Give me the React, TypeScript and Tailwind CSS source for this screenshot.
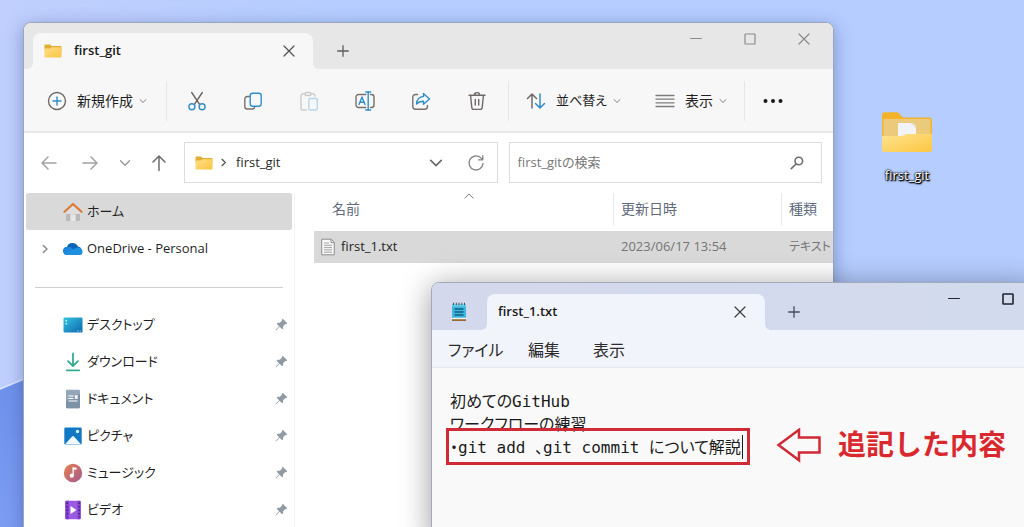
import type { ReactNode } from "react";
import clsx from "clsx";

function StrokeIcon({
  className,
  viewBox = "0 0 20 20",
  width = 1.4,
  children,
}: {
  className: string;
  viewBox?: string;
  width?: number;
  children: ReactNode;
}) {
  return (
    <svg
      viewBox={viewBox}
      className={clsx("shrink-0", className)}
      fill="none"
      stroke="currentColor"
      strokeWidth={width}
      strokeLinecap="round"
      strokeLinejoin="round"
      aria-hidden
    >
      {children}
    </svg>
  );
}

function ChevronDown({ className }: { className: string }) {
  return (
    <StrokeIcon className={className} viewBox="0 0 12 12" width={1.4}>
      <path d="M1.5 3.8 6 8.2l4.5-4.4" />
    </StrokeIcon>
  );
}

function ChevronRight({ className }: { className: string }) {
  return (
    <StrokeIcon className={className} viewBox="0 0 12 12" width={1.8}>
      <path d="M4 1.8 8.4 6 4 10.2" />
    </StrokeIcon>
  );
}

function CloseIcon({ className }: { className: string }) {
  return (
    <StrokeIcon className={className} viewBox="0 0 12 12" width={1.2}>
      <path d="m1 1 10 10M11 1 1 11" />
    </StrokeIcon>
  );
}

function PlusIcon({ className }: { className: string }) {
  return (
    <StrokeIcon className={className} viewBox="0 0 12 12" width={1.3}>
      <path d="M6 .7v10.6M.7 6h10.6" />
    </StrokeIcon>
  );
}

function MinimizeIcon({ className }: { className: string }) {
  return (
    <StrokeIcon className={className} viewBox="0 0 12 12" width={1.2}>
      <path d="M.6 5.5h10.8" />
    </StrokeIcon>
  );
}

function MaximizeIcon({ className, width = 1.2 }: { className: string; width?: number }) {
  return (
    <StrokeIcon className={className} viewBox="0 0 12 12" width={width}>
      <rect x="1" y="1" width="10" height="10" rx=".6" />
    </StrokeIcon>
  );
}

function FolderIcon({ className }: { className: string }) {
  return (
    <svg viewBox="0 0 18 14" className={clsx("shrink-0", className)} aria-hidden>
      <defs>
        <linearGradient id="folder-front" x1="0" y1="0" x2="1" y2="1">
          <stop offset="0" stopColor="#ffe08a" />
          <stop offset="1" stopColor="#f9c440" />
        </linearGradient>
      </defs>
      <path d="M.5 1.4c0-.6.4-1 1-1H6l1.700 1.500h8.800c.6 0 1 .4 1 1V7H.5z" fill="#dfae34" />
      <path d="M.5 4.600h5.700l1.600-1.400h8.700c.6 0 1 .4 1 1v8.300c0 .6-.4 1-1 1h-15c-.6 0-1-.4-1-1z" fill="url(#folder-front)" />
    </svg>
  );
}

function PinIcon() {
  return (
    <svg viewBox="0 0 14 14" className="size-[13px] shrink-0" fill="#8f9aa3" aria-hidden>
      <path d="M8.300.8 13.200 5.700 12 6.600l-.9-.2-2.400 2.400.1 2.300-1.100 1L5 9.400 1.200 13.200.6 13.300.7 12.700 4.500 8.900 1.800 6.200l1-1.100 2.400.1 2.400-2.400-.2-.9z" />
    </svg>
  );
}

function HomeIcon() {
  return (
    <svg viewBox="0 0 20 20" className="size-5 shrink-0" aria-hidden>
      <path d="M3 8.500 10 2.500l7 6V18a1 1 0 0 1-1 1h-3.500v-6.500h-5V19H4a1 1 0 0 1-1-1z" fill="#b9b9b9" />
      <path d="M3 8.500 10 2.500l7 6V12H3z" fill="#dedede" />
      <path d="M7.500 12.500h5V19h-5z" fill="#e6e6e6" />
      <path d="M1.500 9.800 10 2l8.500 7.800" fill="none" stroke="#dd7a35" strokeWidth="2.2" strokeLinecap="round" strokeLinejoin="round" />
    </svg>
  );
}

function CloudIcon() {
  return (
    <svg viewBox="0 0 20 14" className="h-[14px] w-5 shrink-0" aria-hidden>
      <path d="M4.500 13A4 4 0 0 1 3.800 5 6 6 0 0 1 15 4.500 4.400 4.400 0 0 1 15.800 13z" fill="#0f62b5" />
      <path d="M4.500 13a4 4 0 0 1-.9-7.900c2-.6 3.900 0 5.500 1.200L19 12c-.7.700-1.700 1-3 1z" fill="#1a86dd" />
      <path d="M1.500 11.300 11 7.200c2.500-2.500 6.800-2.400 8.300 1 .8 2-.1 4.800-3.300 4.800H4.500c-1.300 0-2.400-.7-3-1.700z" fill="#1f8fe0" />
    </svg>
  );
}

function DesktopIcon() {
  return (
    <svg viewBox="0 0 20 20" className="size-5 shrink-0" aria-hidden>
      <defs>
        <linearGradient id="desktop-fill" x1="0" y1="0" x2="1" y2="1">
          <stop offset="0" stopColor="#35c4e0" />
          <stop offset="1" stopColor="#0c67ad" />
        </linearGradient>
      </defs>
      <rect x=".5" y="2.500" width="19" height="15" rx="1.200" fill="url(#desktop-fill)" />
      <path d="M2.500 5h1.600v1.600H2.500zM2.500 8h1.600v1.600H2.500z" fill="#c8f3fb" />
      <path d="M14 16h1.500M16.500 16H18" stroke="#7ad1f0" />
    </svg>
  );
}

function DownloadIcon() {
  return (
    <StrokeIcon className="size-5 text-[#35ab92]" width={1.8}>
      <path d="M10 1.500v12.300M5 9.200l5 4.800 5-4.800M3.800 18.300h12.400" />
    </StrokeIcon>
  );
}

function DocumentIcon() {
  return (
    <svg viewBox="0 0 20 20" className="size-5 shrink-0" aria-hidden>
      <rect x="3" y=".8" width="14" height="18.400" rx="1.200" fill="#94a7b8" />
      <path d="M3 12 17 5v13a1.200 1.200 0 0 1-1.200 1.200H4.200A1.200 1.200 0 0 1 3 18z" fill="#7c92a6" />
      <path d="M5.500 7h5M5.500 9.500h5M5.500 12h9" stroke="#fff" strokeWidth="1.100" />
      <rect x="11.800" y="6.300" width="2.800" height="3.500" fill="#fff" />
    </svg>
  );
}

function PictureIcon() {
  return (
    <svg viewBox="0 0 20 20" className="size-5 shrink-0" aria-hidden>
      <rect x="1.300" y="1.500" width="17.400" height="17" rx="1.300" fill="#1278c4" />
      <path d="m2 18.300 6.900-7.600a1.500 1.500 0 0 1 2.200 0l6.900 7.600z" fill="#eef8ff" />
      <circle cx="14.500" cy="5.500" r="1.700" fill="#d5f0ff" />
    </svg>
  );
}

function MusicIcon() {
  return (
    <svg viewBox="0 0 20 20" className="size-5 shrink-0" aria-hidden>
      <defs>
        <linearGradient id="music-fill" x1="0" y1="0" x2="1" y2="1">
          <stop offset="0" stopColor="#e8824f" />
          <stop offset="1" stopColor="#a4588f" />
        </linearGradient>
      </defs>
      <circle cx="10" cy="10" r="9.200" fill="url(#music-fill)" />
      <path d="M10.200 4.500v8" stroke="#fff" strokeWidth="1.300" />
      <path d="M9.600 4.500h3.900v2.200H9.600z" fill="#fff" />
      <circle cx="8.800" cy="12.700" r="2.100" fill="#fff" />
    </svg>
  );
}

function VideoIcon() {
  return (
    <svg viewBox="0 0 20 20" className="size-5 shrink-0" aria-hidden>
      <rect x="2.300" y=".8" width="15.400" height="18.400" rx="1.300" fill="#9a5be2" />
      <path d="M2.300 2A1.200 1.200 0 0 1 3.500.8H6v18.400H3.500A1.200 1.200 0 0 1 2.300 18zM14.500.8h2a1.200 1.200 0 0 1 1.200 1.200v16a1.200 1.200 0 0 1-1.200 1.200h-2z" fill="#8443cf" />
      <path d="M4.200 2.500v15M16.100 2.500v15" stroke="#4a1f8a" strokeWidth="1.500" strokeDasharray="1.600 1.900" />
      <path d="M7.500 6v8l6-4z" fill="#fff" />
    </svg>
  );
}

function TextFileIcon() {
  return (
    <svg viewBox="0 0 14 18" className="h-[18px] w-[14px] shrink-0" aria-hidden>
      <path d="M.7 1.200h9.500L13.300 4.500v12.300H.7z" fill="#f7f7f7" stroke="#8d8d8d" />
      <path d="M10 1.200v3.500h3.300" fill="none" stroke="#8d8d8d" />
      <path d="M3 5h5M3 7.300h8M3 9.600h8M3 11.900h8M3 14.200h8" stroke="#a3a3a3" />
    </svg>
  );
}

function NotepadIcon() {
  return (
    <svg viewBox="0 0 16 20" className="h-5 w-4 shrink-0" aria-hidden>
      <path d="M1 2.500h14v13.500H1z" fill="#3db7dc" />
      <path d="M1 2.500h14v2H1z" fill="#6cd0ea" />
      <path d="M2.500.7v2.500M5.300.7v2.500M8 .7v2.500M10.800.7v2.500M13.500.7v2.500" stroke="#37505e" />
      <path d="M3.500 7h9M3.500 10h9M3.500 13h9" stroke="#135f82" strokeWidth="1.400" />
      <path d="M1 15.800h14v1.400H1z" fill="#f2f2ea" />
      <path d="M1 17.200h14V19H1z" fill="#9a6a35" />
    </svg>
  );
}

const COMMANDS = [
  {
    label: "切り取り",
    icon: (
      <StrokeIcon className="size-5">
        <path d="M4.700 1.500 12.600 13.300M15.300 1.500 7.400 13.300" stroke="#6b6461" />
        <circle cx="4.900" cy="15.800" r="3" stroke="#2f8dc9" />
        <circle cx="15.100" cy="15.800" r="3" stroke="#2f8dc9" />
      </StrokeIcon>
    ),
  },
  {
    label: "コピー",
    icon: (
      <StrokeIcon className="size-5">
        <path d="M6.500 5.500H4.300a2.500 2.500 0 0 0-2.500 2.500v7.500A2.500 2.500 0 0 0 4.300 18h4.900a2.500 2.500 0 0 0 2.500-2.300" stroke="#77706d" />
        <rect x="7.200" y="2.200" width="11" height="13" rx="2.400" stroke="#2f8dc9" />
      </StrokeIcon>
    ),
  },
  {
    label: "貼り付け",
    icon: (
      <StrokeIcon className="size-5">
        <path d="M6 3H3.500A1.500 1.500 0 0 0 2 4.500v13A1.500 1.500 0 0 0 3.500 19H7.500M12 3h2.500A1.500 1.500 0 0 1 16 4.500v.7" stroke="#cbcbcb" />
        <rect x="6" y="1.500" width="6" height="3" rx="1.500" stroke="#cbcbcb" />
        <rect x="9.800" y="7.500" width="8.500" height="11.500" rx="1.400" stroke="#b5d6ea" />
      </StrokeIcon>
    ),
  },
  {
    label: "名前の変更",
    icon: (
      <StrokeIcon className="size-5">
        <path d="M10.800 3.500H3.500A2.500 2.500 0 0 0 1 6v8a2.500 2.500 0 0 0 2.500 2.500h7.300M15.500 3.500h1A2.500 2.500 0 0 1 19 6v8a2.500 2.500 0 0 1-2.500 2.500h-1" stroke="#77706d" />
        <path d="M13.200 1.200v17.600M10.800 1h4.800M10.800 19h4.800M4 13.500l3-7.500 3 7.500M5 11.200h4" stroke="#2f8dc9" />
      </StrokeIcon>
    ),
  },
  {
    label: "共有",
    icon: (
      <StrokeIcon className="size-5">
        <path d="M6.500 3.500h-2A2.700 2.700 0 0 0 1.800 6.200v9.300a2.700 2.700 0 0 0 2.700 2.700h9.300a2.700 2.700 0 0 0 2.700-2.700v-1" stroke="#77706d" />
        <path d="M12.500 2.500 18.500 8l-6 5.200v-3c-3.200 0-5.200.6-7 2.800.3-4 2.500-7.200 7-7.600z" stroke="#2f8dc9" />
      </StrokeIcon>
    ),
  },
  {
    label: "削除",
    icon: (
      <StrokeIcon className="size-5 text-[#6f6a68]">
        <path d="M2 4.300h16M7.300 4.300a2.700 2.700 0 0 1 5.400 0M3.600 4.500l1.200 12a2 2 0 0 0 2 1.900h6.400a2 2 0 0 0 2-1.900l1.200-12M8.300 8.500v5.500M11.700 8.500v5.500" />
      </StrokeIcon>
    ),
  },
];

const QUICK_ACCESS = [
  { label: "デスクトップ", icon: <DesktopIcon /> },
  { label: "ダウンロード", icon: <DownloadIcon /> },
  { label: "ドキュメント", icon: <DocumentIcon /> },
  { label: "ピクチャ", icon: <PictureIcon /> },
  { label: "ミュージック", icon: <MusicIcon /> },
  { label: "ビデオ", icon: <VideoIcon /> },
];

const FILES = [{ name: "first_1.txt", modified: "2023/06/17 13:54", type: "テキスト" }];

const NOTE = "初めてのGitHub\nワークフローの練習\n・git add 、git commit について解説";

function Separator() {
  return <div className="h-10 w-px shrink-0 bg-[#e6e6e6]" />;
}

function SidebarItem({
  label,
  icon,
  selected,
  expandable,
  pinned,
}: {
  label: string;
  icon: ReactNode;
  selected?: boolean;
  expandable?: boolean;
  pinned?: boolean;
}) {
  return (
    <li>
      <a
        href="#"
        className={clsx(
          "flex h-[37px] items-center rounded-xs pr-1 text-[#1f1f1f]",
          selected && "bg-[#d9d9d9]",
        )}
      >
        <span className="flex w-[37px] shrink-0 justify-center text-[#8a8a8a]">
          {expandable && <ChevronRight className="size-[10px]" />}
        </span>
        {icon}
        <span className="ml-1 flex-1 whitespace-nowrap">{label}</span>
        {pinned && <PinIcon />}
      </a>
    </li>
  );
}

function ExplorerWindow() {
  return (
    <section className="absolute top-[22px] right-[190px] -bottom-4 left-[23px] flex flex-col overflow-hidden rounded-t-lg border border-[#9aa5bd] bg-white text-[13px] shadow-[0_4px_18px_rgba(40,60,120,0.4)]">
      <header className="flex h-[46px] shrink-0 items-end bg-[#e7e7e7]">
        <div className="relative ml-[9px] flex h-9 w-[280px] items-center rounded-t-lg bg-[#f7f7f7] pr-[18px] pl-[11px] before:absolute before:bottom-0 before:-left-1.5 before:size-1.5 before:bg-[radial-gradient(circle_at_0_0,transparent_6px,#f7f7f7_6px)] after:absolute after:-right-1.5 after:bottom-0 after:size-1.5 after:bg-[radial-gradient(circle_at_100%_0,transparent_6px,#f7f7f7_6px)]">
          <FolderIcon className="h-[14px] w-[18px]" />
          <span className="ml-3 flex-1 font-semibold text-[#1b1b1b]">first_git</span>
          <button type="button" aria-label="タブを閉じる" className="text-[#4f4f4f]">
            <CloseIcon className="size-3" />
          </button>
        </div>
        <button type="button" aria-label="新しいタブ" className="ml-6 flex h-9 items-center text-[#5c5c5c]">
          <PlusIcon className="size-3" />
        </button>
        <div className="mr-0.5 ml-auto flex h-8 self-start text-[#8b8b8b]">
          <button type="button" aria-label="最小化" className="flex w-[54px] items-center justify-center">
            <MinimizeIcon className="size-3" />
          </button>
          <button type="button" aria-label="最大化" className="flex w-[54px] items-center justify-center">
            <MaximizeIcon className="size-3" />
          </button>
          <button type="button" aria-label="閉じる" className="flex w-[54px] items-center justify-center">
            <CloseIcon className="size-3" />
          </button>
        </div>
      </header>

      <div className="flex h-16 shrink-0 items-center border-b-2 border-[#e9e9e9] bg-[#f7f7f7] pt-0.5">
        <button type="button" className="flex items-center pl-[23px] text-[#1f1f1f]">
          <StrokeIcon className="size-5">
            <circle cx="10" cy="10" r="8.500" stroke="#6f6a68" />
            <path d="M10 6v8M6 10h8" stroke="#2f8dc9" />
          </StrokeIcon>
          <span className="ml-2.5 text-sm whitespace-nowrap">新規作成</span>
          <ChevronDown className="ml-1.5 size-2 text-[#777]" />
        </button>
        <div className="ml-[19px]">
          <Separator />
        </div>
        <div className="ml-0.5 flex">
          {COMMANDS.map((command) => (
            <button
              key={command.label}
              type="button"
              aria-label={command.label}
              className="flex h-10 w-14 items-center justify-center"
            >
              {command.icon}
            </button>
          ))}
        </div>
        <div className="ml-[3px]">
          <Separator />
        </div>
        <button type="button" className="ml-[17px] flex items-center text-[#1f1f1f]">
          <StrokeIcon className="size-5" width={1.5}>
            <path d="M6 17V3M1.500 7.500 6 3l4.500 4.500" stroke="#6f6a68" />
            <path d="M14 3v14M9.500 12.500 14 17l4.500-4.500" stroke="#2f8dc9" />
          </StrokeIcon>
          <span className="ml-2.5 whitespace-nowrap">並べ替え</span>
          <ChevronDown className="ml-1.5 size-2 text-[#777]" />
        </button>
        <button type="button" className="ml-[34px] flex items-center text-[#1f1f1f]">
          <StrokeIcon className="size-5 text-[#7c7c7c]" width={1.3}>
            <path d="M1 4.500h18M1 8.200h18M1 11.800h18M1 15.500h18" />
          </StrokeIcon>
          <span className="ml-2.5 text-sm whitespace-nowrap">表示</span>
          <ChevronDown className="ml-1.5 size-2 text-[#777]" />
        </button>
        <div className="ml-[17px]">
          <Separator />
        </div>
        <button type="button" aria-label="もっと見る" className="ml-[18px]">
          <svg viewBox="0 0 20 6" className="h-[6px] w-5" fill="#1b1b1b" aria-hidden>
            <circle cx="2.500" cy="3" r="2" />
            <circle cx="10" cy="3" r="2" />
            <circle cx="17.500" cy="3" r="2" />
          </svg>
        </button>
      </div>

      <div className="flex shrink-0 items-center pt-[9px] pr-[11px] pl-1">
        <button type="button" aria-label="戻る" className="flex w-[41px] justify-center text-[#a3a3a3]">
          <StrokeIcon className="size-5" width={1.5}>
            <path d="M17 10H3M9 4l-6 6 6 6" />
          </StrokeIcon>
        </button>
        <button type="button" aria-label="進む" className="flex w-[41px] justify-center text-[#a3a3a3]">
          <StrokeIcon className="size-5" width={1.5}>
            <path d="M3 10h14M11 4l6 6-6 6" />
          </StrokeIcon>
        </button>
        <button type="button" aria-label="最近表示した場所" className="flex w-[30px] justify-center text-[#999]">
          <ChevronDown className="size-3" />
        </button>
        <button type="button" aria-label="上へ" className="flex w-[38px] justify-center text-[#6b6b6b]">
          <StrokeIcon className="size-5" width={1.5}>
            <path d="M10 17.500V3M4 9l6-6 6 6" />
          </StrokeIcon>
        </button>
        <div className="ml-1.5 grid min-w-0 flex-1 grid-cols-2 gap-[11px]">
          <div className="flex h-[41px] min-w-0 items-center border border-[#dcdcdc] pr-3 pl-2.5 text-[#2b2b2b]">
            <FolderIcon className="h-[14px] w-[18px]" />
            <ChevronRight className="ml-1.5 size-[9px] text-[#555]" />
            <a href="#" className="ml-2 flex-1">
              first_git
            </a>
            <button type="button" aria-label="以前の場所" className="text-[#6b6b6b]">
              <ChevronDown className="size-[14px]" />
            </button>
            <button type="button" aria-label="最新の情報に更新" className="ml-6 text-[#858585]">
              <StrokeIcon className="size-[18px]" width={1.5}>
                <path d="M17.800 10.500A7.800 7.800 0 1 1 15.400 4.300L17.500 6.300M17.500 1.800v4.700h-4.700" />
              </StrokeIcon>
            </button>
          </div>
          <label className="flex h-[41px] min-w-0 items-center border border-[#dcdcdc] pr-[17px] pl-2 text-[#6d6d6d]">
            <input
              type="search"
              aria-label="first_gitの検索"
              placeholder="first_gitの検索"
              className="min-w-0 flex-1 bg-transparent outline-none placeholder:text-[#777]"
            />
            <StrokeIcon className="size-[14px]" viewBox="0 0 14 14" width={1.6}>
              <circle cx="8.800" cy="5" r="3.800" />
              <path d="M6 8 1.300 12.600" />
            </StrokeIcon>
          </label>
        </div>
      </div>

      <div className="flex flex-1 pt-[10px]">
        <nav className="w-[271px] shrink-0 border-r border-[#f3f3f3] px-0.5">
          <ul>
            <SidebarItem label="ホーム" icon={<HomeIcon />} selected />
            <SidebarItem label="OneDrive - Personal" icon={<CloudIcon />} expandable />
          </ul>
          <hr className="mx-[9px] mt-5 mb-[18px] border-[#cfcfcf]" />
          <ul>
            {QUICK_ACCESS.map((item) => (
              <SidebarItem key={item.label} label={item.label} icon={item.icon} pinned />
            ))}
          </ul>
        </nav>
        <div className="min-w-0 flex-1 overflow-hidden pl-[19px]">
          <table className="w-full table-fixed border-collapse text-left whitespace-nowrap">
            <colgroup>
              <col className="w-[299px]" />
              <col className="w-[168px]" />
              <col />
            </colgroup>
            <thead>
              <tr className="h-[38px] align-top text-sm text-[#5f6b7c]">
                <th className="relative p-0 font-normal">
                  <div className="flex h-8 items-center pl-[18px]">名前</div>
                  <StrokeIcon className="absolute -top-0.5 left-[150px] size-[10px] text-[#777]" viewBox="0 0 12 12" width={1.2}>
                    <path d="M1 8.500 6 3.500l5 5" />
                  </StrokeIcon>
                </th>
                <th className="p-0 font-normal">
                  <div className="flex h-8 items-center border-l border-[#e8e8e8] pl-[7px]">更新日時</div>
                </th>
                <th className="p-0 font-normal">
                  <div className="flex h-8 items-center border-l border-[#e8e8e8] pl-[7px]">種類</div>
                </th>
              </tr>
            </thead>
            <tbody>
              {FILES.map((file) => (
                <tr key={file.name} className="h-8 bg-[#d9d9d9] text-[#757575]">
                  <td className="p-0">
                    <div className="flex items-center gap-1.5 pl-[7px] text-[#1f1f1f]">
                      <TextFileIcon />
                      {file.name}
                    </div>
                  </td>
                  <td className="p-0 pl-2">{file.modified}</td>
                  <td className="overflow-hidden p-0 pl-2 text-xs">{file.type}</td>
                </tr>
              ))}
            </tbody>
          </table>
        </div>
      </div>
    </section>
  );
}

function NotepadWindow() {
  return (
    <section className="absolute top-[282px] -right-3 -bottom-4 left-[431px] flex flex-col overflow-hidden rounded-tl-lg border border-[#a3a9bd] bg-[#f9f9f9] shadow-[0_4px_30px_rgba(0,0,0,0.4)]">
      <header className="flex h-[47px] shrink-0 items-end bg-linear-to-r from-[#d4d8ec] to-[#d2dbed]">
        <div className="flex h-9 w-[55px] items-center pl-[19px]">
          <NotepadIcon />
        </div>
        <div className="relative flex h-9 w-[278px] items-center rounded-t-lg bg-[#f2f4fb] pr-[19px] pl-[11px] text-[13px] before:absolute before:bottom-0 before:-left-1.5 before:size-1.5 before:bg-[radial-gradient(circle_at_0_0,transparent_6px,#f2f4fb_6px)] after:absolute after:-right-1.5 after:bottom-0 after:size-1.5 after:bg-[radial-gradient(circle_at_100%_0,transparent_6px,#f2f4fb_6px)]">
          <span className="flex-1 font-semibold text-[#1b1b1b]">first_1.txt</span>
          <button type="button" aria-label="タブを閉じる" className="text-[#3d3d3d]">
            <CloseIcon className="size-3" />
          </button>
        </div>
        <button type="button" aria-label="新しいタブ" className="ml-[23px] flex h-9 items-center text-[#474b59]">
          <PlusIcon className="size-3" />
        </button>
        <div className="ml-auto flex h-8 self-start text-[#20242e]">
          <button type="button" aria-label="最小化" className="flex w-[54px] items-center justify-center">
            <MinimizeIcon className="size-3" />
          </button>
          <button type="button" aria-label="最大化" className="flex w-[54px] items-center justify-center">
            <MaximizeIcon className="size-3" width={1.6} />
          </button>
        </div>
      </header>
      <div className="grid h-[38px] shrink-0 grid-cols-[80px_65px_auto] items-center justify-items-start border-b border-[#e8e9ee] bg-[#f2f4fb] pt-0.5 pl-4 text-base text-[#2b2b2b]">
        <button type="button">ファイル</button>
        <button type="button">編集</button>
        <button type="button">表示</button>
      </div>
      <textarea
        aria-label="テキスト エディター"
        defaultValue={NOTE}
        spellCheck={false}
        className="w-full flex-1 resize-none bg-transparent px-[18px] pt-[22px] font-['DejaVu_Sans_Mono','Noto_Sans_CJK_JP',monospace] text-base leading-[23px] text-[#1b1b1b] outline-none"
      />
    </section>
  );
}

function Annotation() {
  return (
    <div className="absolute top-[428px] left-[446px] flex items-start text-[#d9292f]">
      <div className="relative h-[37px] w-[304px] border-3 border-[#cf2a35]">
        <span className="absolute top-1 right-1 h-6 w-px bg-[#1b1b1b]" />
      </div>
      <svg viewBox="0 0 46 36" className="ml-[26px] h-9 w-[46px]" fill="none" stroke="#cf2a35" strokeWidth="2.500" aria-hidden>
        <path d="M2.500 17 23 1.800v7.700h20.500v15H23v7.700z" />
      </svg>
      <span className="ml-4 text-[28px] leading-8 font-bold whitespace-nowrap [font-feature-settings:normal]">
        追記した内容
      </span>
    </div>
  );
}

function DesktopShortcut() {
  return (
    <a href="#" className="absolute top-[110px] left-[867px] flex w-20 flex-col items-center gap-3">
      <svg viewBox="0 0 52 44" className="h-11 w-[52px]" aria-hidden>
        <defs>
          <linearGradient id="shortcut-front" x1="0" y1="0" x2="1" y2="1">
            <stop offset="0" stopColor="#ffe391" />
            <stop offset="1" stopColor="#fbc63f" />
          </linearGradient>
        </defs>
        <path d="M1 5c0-1.700 1-2.700 2.700-2.700h13L22 7.500h26.500c1.500 0 2.500 1 2.500 2.500v20H1z" fill="#f2b22c" />
        <path d="M2.500 9h47v18h-47z" fill="#ecca7c" />
        <path d="M17 13h12l6 5v9H17z" fill="#f1f3f7" />
        <path d="M29 13c4 0 6 2 6 5z" fill="#e3e7ee" />
        <path d="M1 26h20l4-2h26v15.500c0 1.500-1 2.500-2.500 2.500h-45C2 42 1 41 1 39.500z" fill="url(#shortcut-front)" />
      </svg>
      <span className="text-[13px] leading-[18px] text-white [text-shadow:0_0_2px_#000,0_0_2px_#000,1px_1px_2px_#000,1px_1px_1px_#000]">
        first_git
      </span>
    </a>
  );
}

export default function App() {
  return (
    <main className="relative h-screen overflow-hidden bg-[#b5cdff] font-['Open_Sans','Noto_Sans_CJK_JP',sans-serif] [font-feature-settings:'palt']">
      <svg className="absolute inset-0 h-full w-full" viewBox="0 0 1024 527" preserveAspectRatio="none" aria-hidden>
        <defs>
          <linearGradient id="sky" x1="0" y1="0" x2="1" y2="0">
            <stop offset="0" stopColor="#c0cffd" />
            <stop offset=".35" stopColor="#b5cdff" />
            <stop offset="1" stopColor="#b5cdff" />
          </linearGradient>
          <linearGradient id="petal" x1="0" y1="0" x2="0" y2="1">
            <stop offset="0" stopColor="#6c8fea" />
            <stop offset="1" stopColor="#7d9df3" />
          </linearGradient>
        </defs>
        <path d="M0 0h1024v527H0z" fill="url(#sky)" />
        <path d="M0 389 60 364v163H0z" fill="url(#petal)" />
        <path d="M0 389 60 364" stroke="#dce8ff" strokeWidth="1.500" />
      </svg>
      <DesktopShortcut />
      <ExplorerWindow />
      <NotepadWindow />
      <Annotation />
    </main>
  );
}
